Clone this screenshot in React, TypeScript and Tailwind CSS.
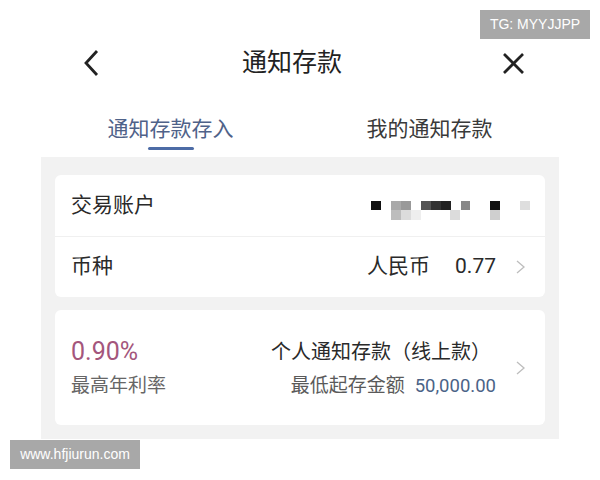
import React from "react";

const font = "font-['Roboto','Noto_Sans_CJK_SC',sans-serif]";

const Chevron = () => (
  <svg width="9" height="14" viewBox="0 0 9 14" className="shrink-0">
    <polyline points="1,1 8,7 1,13" fill="none" stroke="#bdbdbd" strokeWidth="1.3" />
  </svg>
);

// pixelated (masked) account number
const cells: [number, number, number, number, string][] = [
  [0, 0, 10, 9, "#111"],
  [20, 0, 10, 19, "#a9a9a9"],
  [20, 9, 10, 10, "#bdbdbd"],
  [30, 0, 10, 9, "#999"],
  [30, 9, 10, 10, "#dcdcdc"],
  [40, 9, 10, 10, "#eee"],
  [50, 0, 10, 9, "#555"],
  [60, 0, 10, 9, "#333"],
  [70, 0, 10, 9, "#222"],
  [79, 9, 10, 10, "#dcdcdc"],
  [90, 0, 9, 9, "#888"],
  [119, 0, 10, 9, "#111"],
  [119, 9, 10, 10, "#cfcfcf"],
  [149, 0, 10, 9, "#dedede"],
];

const Masked = () => (
  <svg width="160" height="20" viewBox="0 0 160 20" className="mt-[26px]">
    {cells.map(([x, y, w, h, c], i) => (
      <rect key={i} x={x} y={y} width={w} height={h} fill={c} />
    ))}
  </svg>
);

export default function App() {
  return (
    <div className={`relative w-[600px] h-[480px] bg-white overflow-hidden ${font}`}>
      {/* 顶部导航 */}
      <div className="flex items-center h-[46px] mt-[40px]">
        <div className="w-[42px] ml-[70px] flex justify-center">
          <svg width="16" height="28" viewBox="0 0 16 28">
            <polyline points="14,2 3,14 14,26" fill="none" stroke="#222" strokeWidth="2.8" />
          </svg>
        </div>
        <div className="flex-1 text-center text-[25px] leading-[46px] text-[#222] pr-[20px]">通知存款</div>
        <div className="w-[43px] mr-[65px] flex justify-center">
          <svg width="23" height="23" viewBox="0 0 23 23">
            <line x1="2" y1="2" x2="21" y2="21" stroke="#222" strokeWidth="2.7" />
            <line x1="21" y1="2" x2="2" y2="21" stroke="#222" strokeWidth="2.7" />
          </svg>
        </div>
      </div>

      {/* 标签页 */}
      <div className="flex mx-[41px] pt-[29px]">
        <div className="flex-1 flex flex-col items-center">
          <span className="text-[21px] leading-[28px] text-[#4f6289]">通知存款存入</span>
          <span className="mt-[4px] w-[46px] h-[3px] rounded-full bg-[#4d6ca6]" />
        </div>
        <div className="flex-1 flex flex-col items-center">
          <span className="text-[21px] leading-[28px] text-[#3a3a3a]">我的通知存款</span>
        </div>
      </div>

      {/* 内容面板 */}
      <div className="mx-[41px] mt-[7px] bg-[#f2f2f2] px-[14px] pt-[18px] pb-[14px]">
        <div className="bg-white rounded-md">
          <div className="flex items-start justify-between h-[62px] pl-[16px] pr-[14px] border-b border-[#f0f0f0]">
            <span className="text-[21px] leading-[30px] text-[#2a2a2a] mt-[15px]">交易账户</span>
            <Masked />
          </div>
          <div className="flex items-center h-[60px] pl-[16px] pr-[20px]">
            <span className="flex-1 text-[21px] text-[#2a2a2a]">币种</span>
            <span className="text-[21px] text-[#2a2a2a]">人民币</span>
            <span className="ml-[25px] text-[21px] text-[#2a2a2a]">0.77</span>
            <span className="ml-[20px]">
              <Chevron />
            </span>
          </div>
        </div>

        <div className="mt-[13px] bg-white rounded-md h-[115px] flex items-center pl-[16px] pr-[20px]">
          <div className="flex-1 flex flex-col">
            <span className="text-[25px] leading-[30px] text-[#a4567c]">0.90%</span>
            <span className="mt-[7px] text-[19px] leading-[24px] text-[#666]">最高年利率</span>
          </div>
          <div className="flex flex-col items-end">
            <span className="text-[20px] leading-[30px] text-[#2a2a2a] pr-[5px]">个人通知存款（线上款）</span>
            <span className="mt-[7px] text-[19px] leading-[24px] text-[#5a5a5a]">
              最低起存金额
              <span className="ml-[10px] text-[18.5px] text-[#4b6387]">50,000.00</span>
            </span>
          </div>
          <span className="ml-[20px]">
            <Chevron />
          </span>
        </div>
      </div>

      {/* 水印 */}
      <div className="absolute left-[480px] top-[10px] w-[110px] h-[29px] bg-[#a8a8a8] text-white text-[14px] font-['Liberation_Sans',sans-serif] flex items-center justify-center">
        TG: MYYJJPP
      </div>
      <div className="absolute left-[10px] top-[440px] w-[130px] h-[29px] bg-[#a8a8a8] text-white text-[14px] font-['Liberation_Sans',sans-serif] flex items-center justify-center">
        www.hfjiurun.com
      </div>
    </div>
  );
}
